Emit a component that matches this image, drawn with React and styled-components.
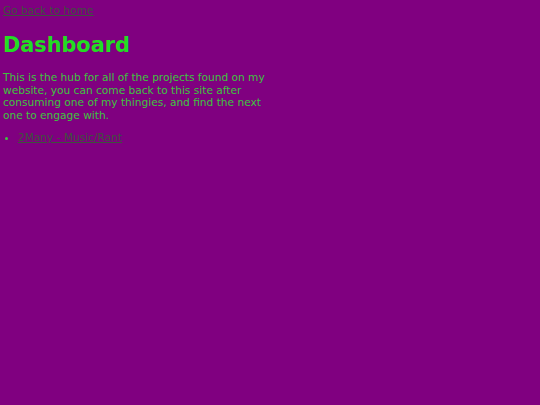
import React from "react";
import styled, { createGlobalStyle } from "styled-components";

const Global = createGlobalStyle`
  html, body { margin: 0; padding: 0; background: #800080; }
  body { font-family: "DejaVu Sans", Verdana, sans-serif; }
`;

const Page = styled.div`
  padding: 4px 3px;
  min-height: 405px;
  box-sizing: border-box;
  color: #3fc43f;
`;

const HomeLink = styled.a`
  display: block;
  font-size: 10.6px;
  line-height: 13px;
  color: #3d523d;
  text-decoration: underline;
`;

const Title = styled.h1`
  margin: 15px 0 0;
  font-size: 20.8px;
  line-height: 26px;
  font-weight: bold;
  color: #22dd22;
`;

const Intro = styled.p`
  margin: 13px 0 0;
  max-width: 275px;
  font-size: 10.6px;
  line-height: 12.6px;
  color: #3fc43f;
`;

const List = styled.ul`
  margin: 10px 0 0;
  padding-left: 15px;
  font-size: 10.6px;
  line-height: 13px;
  color: #3fc43f;
`;

const Item = styled.li``;

const ItemLink = styled.a`
  color: #3d523d;
  text-decoration: underline;
`;

export default function App() {
  return (
    <>
      <Global />
      <Page>
        <HomeLink href="#">Go back to home</HomeLink>
        <Title>Dashboard</Title>
        <Intro>
          This is the hub for all of the projects found on my website, you can
          come back to this site after consuming one of my thingies, and find
          the next one to engage with.
        </Intro>
        <List>
          <Item>
            <ItemLink href="#">2Many - Music/Rant</ItemLink>
          </Item>
        </List>
      </Page>
    </>
  );
}
